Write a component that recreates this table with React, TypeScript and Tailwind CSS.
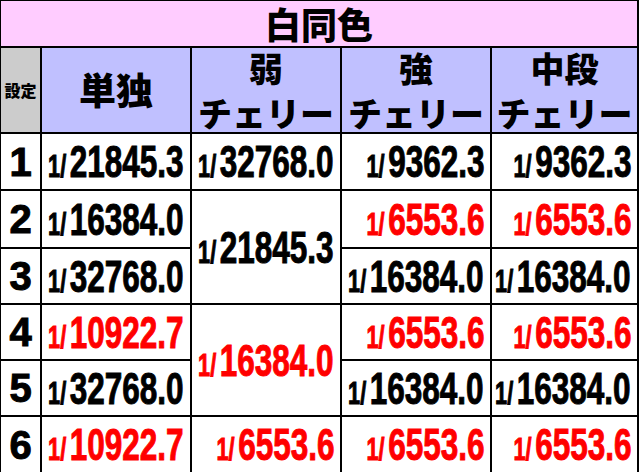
import React from 'react'

type Cell = { v: string; red?: boolean; span?: boolean } | null

// rows: 単独, 弱, 強, 中段 (null = covered by merged cell above)
const rows: Cell[][] = [
  [{ v: '21845.3' }, { v: '32768.0' }, { v: '9362.3' }, { v: '9362.3' }],
  [{ v: '16384.0' }, { v: '21845.3', span: true }, { v: '6553.6', red: true }, { v: '6553.6', red: true }],
  [{ v: '32768.0' }, null, { v: '16384.0' }, { v: '16384.0' }],
  [{ v: '10922.7', red: true }, { v: '16384.0', red: true, span: true }, { v: '6553.6', red: true }, { v: '6553.6', red: true }],
  [{ v: '32768.0' }, null, { v: '16384.0' }, { v: '16384.0' }],
  [{ v: '10922.7', red: true }, { v: '6553.6', red: true }, { v: '6553.6', red: true }, { v: '6553.6', red: true }],
]

const jp = "font-['Noto_Sans_CJK_JP',sans-serif] font-black"
const num = "font-['Liberation_Sans',Arial,sans-serif] font-bold"

function Value({ v, red, span }: { v: string; red?: boolean; span?: boolean }) {
  return (
    <div
      className={`flex items-center justify-end pr-[6px] bg-white overflow-visible ${span ? 'row-span-2' : ''} ${red ? 'text-[#ff0000]' : 'text-black'}`}
    >
      <span
        className={`inline-flex items-baseline origin-right scale-x-[0.7] leading-none whitespace-nowrap [-webkit-text-stroke:1px_currentColor] ${num}`}
      >
        <span className="text-[31px] mr-[5px]">1/</span>
        <span className="text-[45px]">{v}</span>
      </span>
    </div>
  )
}

function Head({ top, bottom }: { top: string; bottom?: string }) {
  return (
    <div className={`bg-[#c0c0ff] flex flex-col items-center justify-center text-black ${jp}`}>
      {bottom ? (
        <>
          <span className="text-[34px] leading-[45px]">{top}</span>
          <span className="text-[34px] leading-[45px]">{bottom}</span>
        </>
      ) : (
        <span className="text-[37px] leading-normal">{top}</span>
      )}
    </div>
  )
}

export default function App() {
  return (
    <div className="w-[640px] h-[472px] overflow-hidden bg-white">
      <div className="w-[639px] bg-black pl-[1px] pt-[1px] pr-[2px] pb-[2px] grid grid-cols-[39px_148px_148px_148px_145px] grid-rows-[45px_84px_55px_56px_54px_54px_54px_55px] gap-[2px]">
        <div className={`col-span-5 bg-[#ffccff] flex items-center justify-center text-black ${jp}`}>
          <span className="text-[36px] leading-[45px]">白同色</span>
        </div>

        <div className={`bg-[#cccccc] flex items-center justify-center text-[16px] leading-normal text-black ${jp}`}>
          設定
        </div>
        <Head top="単独" />
        <Head top="弱" bottom="チェリー" />
        <Head top="強" bottom="チェリー" />
        <Head top="中段" bottom="チェリー" />

        {rows.map((r, i) => (
          <React.Fragment key={i}>
            <div className={`bg-white flex items-center justify-center text-[40px] leading-none text-black [-webkit-text-stroke:1px_black] ${num}`}>
              {i + 1}
            </div>
            {r.map((c, j) => (c ? <Value key={j} v={c.v} red={c.red} span={c.span} /> : null))}
          </React.Fragment>
        ))}
      </div>
    </div>
  )
}
